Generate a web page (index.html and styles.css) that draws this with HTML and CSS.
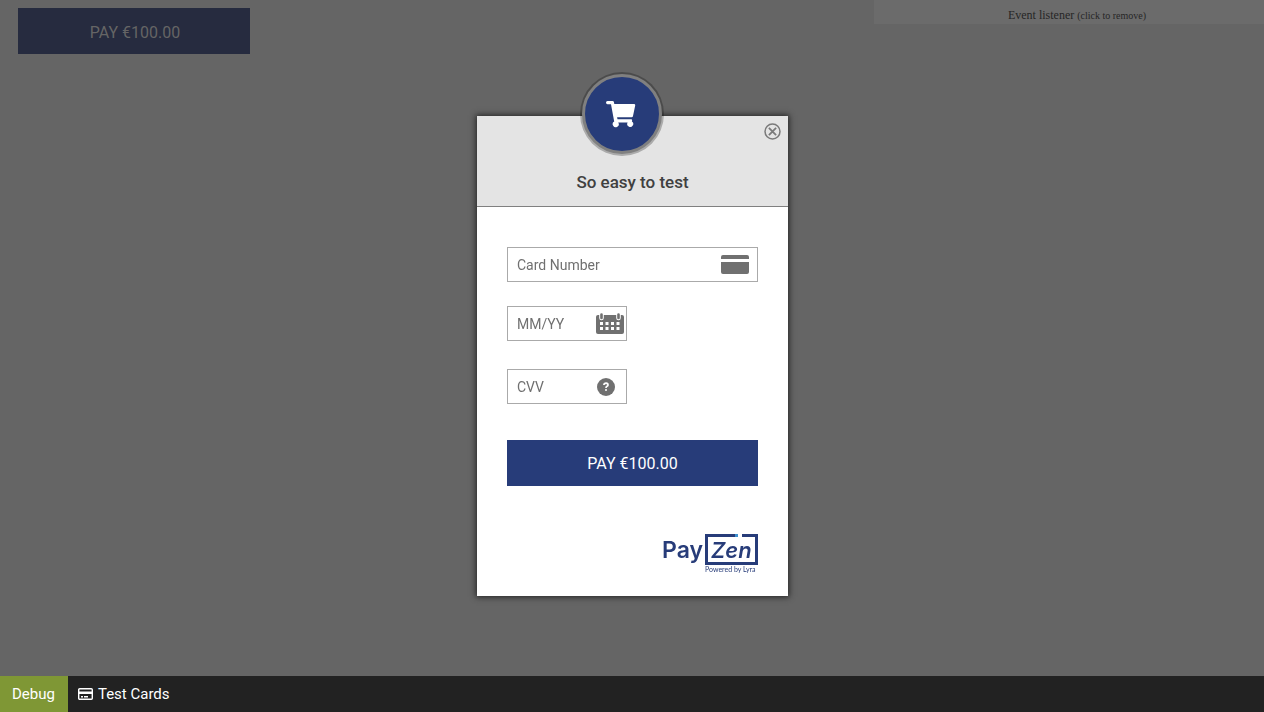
FILE: index.html
```html
<!DOCTYPE html>
<html lang="en">
<head>
<meta charset="utf-8">
<title>Payment</title>
<link rel="stylesheet" href="styles.css">
</head>
<body>
<header class="page-top">
  <button class="pay pay-page" type="button">PAY €100.00</button>
  <button class="listener" type="button">Event listener <small>(click to remove)</small></button>
</header>
<div class="overlay">
  <section class="dialog" role="dialog" aria-labelledby="dialog-title">
    <div class="dialog-head">
      <span class="badge">
        <svg width="30" height="27" viewBox="0 0 30 27" fill="#fff" aria-hidden="true">
          <path d="M1.500 0H6.500q1.200 0 1.400 1L8.300 3H28q1.400 0 1.200 1.400L27 15q-.2 1.200-1.400 1.200H11.100l.4 2H25.200q1.100 0 .9 1.200l-.2 1.100a3 3 0 1 1-4.300 1H12.200a3 3 0 1 1-4-.9L5 3.200H1.500Q0 3.200 0 1.600T1.500 0z"/>
        </svg>
      </span>
      <button class="close" type="button" aria-label="Close">
        <svg width="17" height="17" viewBox="0 0 17 17" fill="none" stroke="#7a7a7a" aria-hidden="true">
          <circle cx="8.500" cy="8.500" r="7.500" stroke-width="1.500"/>
          <path d="M4.900 4.900l7.200 7.200M12.100 4.900l-7.200 7.200" stroke-width="1.800"/>
        </svg>
      </button>
      <h1 class="title" id="dialog-title">So easy to test</h1>
    </div>
    <form class="dialog-body">
      <div class="field field-number">
        <input class="input" type="text" placeholder="Card Number" aria-label="Card Number">
        <svg class="field-icon" width="28" height="19" viewBox="0 0 28 19" fill="#707070" aria-hidden="true">
          <path d="M0 4V2q0-2 2-2h24q2 0 2 2v2zM0 7h28v10q0 2-2 2H2q-2 0-2-2z"/>
        </svg>
      </div>
      <div class="field field-date">
        <input class="input" type="text" placeholder="MM/YY" aria-label="Expiry date, MM/YY">
        <svg class="field-icon" width="28" height="21" viewBox="0 0 28 21" aria-hidden="true">
          <path d="M2 2h24q2 0 2 2v15q0 2-2 2H2q-2 0-2-2V4q0-2 2-2z" fill="#707070"/>
          <path d="M5.500 1v4M22.500 1v4" stroke="#fff" stroke-width="4.600" stroke-linecap="round"/>
          <path d="M5.500 1.500v3.500M22.500 1.500v3.500" stroke="#707070" stroke-width="2.600" stroke-linecap="round"/>
          <path d="M4 9h3v3H4zM9.500 9h3v3h-3zM15 9h3v3h-3zM20.500 9h3v3h-3zM4 14h3v3H4zM9.500 14h3v3h-3zM15 14h3v3h-3zM20.500 14h3v3h-3z" fill="#fff"/>
        </svg>
      </div>
      <div class="field field-cvv">
        <input class="input" type="text" placeholder="CVV" aria-label="CVV">
        <svg class="field-icon" width="18" height="18" viewBox="0 0 18 18" aria-hidden="true">
          <circle cx="9" cy="9" r="9" fill="#707070"/>
          <path d="M6.900 7Q7 5.200 9.100 5.200q1.900.1 1.900 1.700 0 .9-1 1.400Q9 8.800 9 10" fill="none" stroke="#fff" stroke-width="1.700"/>
          <circle cx="9" cy="12" r="1" fill="#fff"/>
        </svg>
      </div>
      <button class="pay pay-form" type="button">PAY €100.00</button>
      <svg class="logo" width="97" height="42" viewBox="0 0 97 42" role="img" aria-label="PayZen, powered by Lyra">
        <path d="M74 3.500H45.500v28H95.500V3.500H81" fill="none" stroke="#273c79" stroke-width="3"/>
        <path d="M74 2h3v3h-3z" fill="#3d8fce"/>
        <text class="logo-pay" x="1" y="26">Pay</text>
        <text class="logo-zen" x="50" y="26">Zen</text>
        <text class="logo-by" x="44" y="40">Powered by Lyra</text>
      </svg>
    </form>
  </section>
</div>
<nav class="toolbar">
  <a class="tool tool-debug" href="#">Debug</a>
  <a class="tool tool-cards" href="#">
    <svg width="15" height="12" viewBox="0 0 15 12" aria-hidden="true">
      <rect x=".7" y=".7" width="13.600" height="10.600" rx="1" fill="none" stroke="#fff" stroke-width="1.400"/>
      <path d="M1 3.500h13v2.500H1zM3 8h2v1.500H3zM6 8h4v1.500H6z" fill="#fff"/>
    </svg>
    Test Cards
  </a>
</nav>
</body>
</html>
```
FILE: styles.css
```css
* {
  box-sizing: border-box;
}

body {
  margin: 0;
  min-height: 100vh;
  display: flex;
  flex-direction: column;
  justify-content: space-between;
  background: #656565;
  font-family: Roboto, sans-serif;
}

button {
  border: 0;
  padding: 0;
  cursor: pointer;
}

.page-top {
  display: flex;
  justify-content: space-between;
  align-items: flex-start;
}

.pay {
  height: 46px;
  padding-top: 2px;
  background: #273c79;
  color: #fff;
  font: 16px/20px Roboto, sans-serif;
}

.pay-page {
  width: 232px;
  margin: 8px 0 0 18px;
  padding: 3px 0 0 2px;
  background: #262b3f;
  color: #656565;
}

.listener {
  width: 390px;
  height: 24px;
  padding: 6px 0 0 16px;
  background: #6b6b6b;
  color: #262626;
  font: 12px/18px "Liberation Serif", serif;
}

.listener small {
  font-size: 10px;
}

.overlay {
  position: fixed;
  inset: 0;
  display: flex;
  align-items: center;
  justify-content: center;
  padding-left: 1px;
}

.dialog {
  width: 311px;
  background: #fff;
  box-shadow: 0 0 6px 1px #222;
}

.dialog-head {
  position: relative;
  padding: 54px 0 12px;
  background: #e4e4e4;
  border-bottom: 1px solid #808080;
}

.badge {
  position: absolute;
  top: -42px;
  left: 105px;
  width: 80px;
  height: 80px;
  display: flex;
  align-items: center;
  justify-content: center;
  padding-right: 2px;
  border: 3px solid #808080;
  border-radius: 50%;
  background: #273c79;
  box-shadow: 0 0 0 2px rgba(0, 0, 0, 0.25);
}

.close {
  position: absolute;
  top: 7px;
  right: 7px;
  background: none;
}

.close svg {
  display: block;
}

.title {
  margin: 0;
  color: #404040;
  font-size: 17px;
  font-weight: 500;
  line-height: 24px;
  text-align: center;
}

.dialog-body {
  display: flex;
  flex-direction: column;
  padding: 40px 30px 22px;
}

.field {
  display: flex;
  align-items: center;
  height: 35px;
  padding: 0 8px 0 9px;
  border: 1px solid #aaa;
}

.field-number {
  margin-bottom: 24px;
}

.field-date {
  width: 120px;
  margin-bottom: 28px;
  padding-right: 2px;
}

.field-cvv {
  width: 120px;
  margin-bottom: 36px;
  padding-right: 11px;
}

.field-icon {
  flex: none;
}

.input {
  flex: 1;
  min-width: 0;
  padding: 0;
  border: 0;
  background: none;
  font: 14px/20px Roboto, sans-serif;
}

.input::placeholder {
  color: #707070;
  opacity: 1;
}

.logo {
  align-self: flex-end;
  margin-top: 46px;
}

.logo text {
  fill: #273c79;
}

.logo-pay {
  font: 600 23px Inter, sans-serif;
}

.logo-zen {
  font: italic 600 22px Inter, sans-serif;
}

.logo-by {
  font: 7px Lato, sans-serif;
}

.toolbar {
  display: flex;
  height: 36px;
  background: #222;
  position: relative;
}

.tool {
  display: flex;
  align-items: center;
  gap: 5px;
  color: #fff;
  font-size: 15px;
  line-height: 20px;
  text-decoration: none;
}

.tool-debug {
  padding: 0 13px 0 12px;
  background: #7f9735;
}

.tool-cards {
  padding: 0 10px;
}
```
